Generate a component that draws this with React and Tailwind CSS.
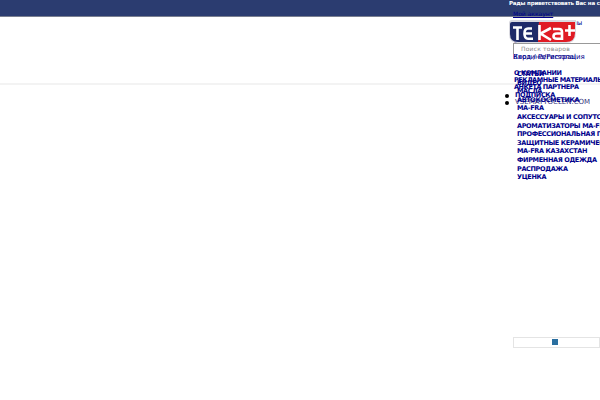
const menu = [
  "СТАТЬИ",
  "ВИДЕО",
  "МАСЛА",
  "АВТОКОСМЕТИКА",
  "MA-FRA",
  "АКСЕССУАРЫ И СОПУТСТВУЮЩИЕ",
  "АРОМАТИЗАТОРЫ MA-FRA",
  "ПРОФЕССИОНАЛЬНАЯ ПОЛИРОВКА",
  "ЗАЩИТНЫЕ КЕРАМИЧЕСКИЕ",
  "MA-FRA КАЗАХСТАН",
  "ФИРМЕННАЯ ОДЕЖДА",
  "РАСПРОДАЖА",
  "УЦЕНКА",
];
const side = ["О КОМПАНИИ", "РЕКЛАМНЫЕ МАТЕРИАЛЫ", "АНКЕТА ПАРТНЕРА"];

const bold = "text-[6.5px] leading-[7px] font-bold text-[#00008b] whitespace-nowrap tracking-[-0.35px]";
const layer = "col-start-1 row-start-1 min-w-0";

function Logo() {
  return (
    <svg width="68" height="24" viewBox="0 0 68 24" className="block">
      <path d="M3 0H67V13Q67 23 57 23H9Q0 23 0 14V3Q0 0 3 0Z" fill="#d9d9e0" />
      <path d="M3 2H30L29 22H9Q1 22 1 14V4Q1 2 3 2Z" fill="#1f2a68" />
      <path d="M30 2H66V13Q66 22 57 22H29Z" fill="#e01b24" />
      <g fill="none" stroke="#fff" strokeWidth="2.6">
        <path d="M4 7.5H13M8.5 7.5V20" />
        <path d="M23 13.5H15.5Q15.5 8.5 19 8.5H23M15.5 13.5Q15.5 18.7 19 18.7H24" />
        <path d="M30.5 5V20M42 8L31.5 13.5L42 20" />
        <path d="M44 9H50Q53 9 53 12V20M53 13.5H48Q44.5 13.5 44.5 16.2Q44.5 18.7 48 18.7H53" />
        <path d="M60.5 5V16M56 10.5H66" />
      </g>
    </svg>
  );
}

export default function App() {
  return (
    <div className="relative w-[600px] h-[400px] overflow-hidden bg-white font-['DejaVu_Sans',sans-serif]">
      <div className="h-[17px] bg-[#2b3c70] border-b border-[#7a7f90]" />
      <div className="h-[68px] border-b-2 border-[#f3f3f3]" />

      <div className="absolute top-0 bottom-0 left-[505px] right-0 flex flex-col overflow-hidden">
        <div className="h-[11px] shrink-0 pl-[4px] text-[5.5px] leading-[7px] font-bold text-white whitespace-nowrap tracking-[-0.2px]">
          Рады приветствовать Вас на сайте
        </div>

        <div className="h-[8px] shrink-0 pl-[8px] text-[6px] leading-[6px] text-[#00008b] underline whitespace-nowrap">
          Мой аккаунт
        </div>

        <div className="grid h-[24px] shrink-0">
          <div className={layer + " pl-[58px] pt-[1px] text-[7px] leading-[7px] text-[#00008b]"}>цены</div>
          <div className={layer + " pl-[9px] pt-[21px] text-[6px] leading-[6px] text-[#00008b]"}>Каталоги</div>
          <div className={layer + " pl-[4px] pt-[1px]"}><Logo /></div>
        </div>

        <div className="ml-[8px] h-[11px] shrink-0 border-t border-l border-[#999] bg-white text-[6px] leading-[9px] text-[#888] pl-[7px] whitespace-nowrap tracking-[0.2px]">
          Поиск товаров
        </div>

        <div className="grid pl-[8px] h-[7px] shrink-0 text-[7px] leading-[7px] text-[#00008b] whitespace-nowrap">
          <div className={layer}>Вход / Регистрация</div>
          <div className={layer}>Корзина/Personal</div>
        </div>

        <div className="grid mt-[8px] shrink-0">
          <div className={layer + " pl-[9px] pt-[1px]"}>
            {side.map((s) => (
              <div key={s} className={bold + " tracking-[-0.45px]"}>{s}</div>
            ))}
            <ul className="mt-[1px]">
              <li className="flex items-center h-[7px] gap-[6px]">
                <span className="w-[4px] h-[4px] rounded-full bg-black ml-[-9px]" />
                <span className={bold}>ПОДПИСКА</span>
              </li>
              <li className="flex items-center h-[7px] gap-[6px]">
                <span className="w-[4px] h-[4px] rounded-full bg-black ml-[-9px]" />
                <span className="text-[7px] leading-[7px] text-[#33337a] whitespace-nowrap">VSEMAYTOCLEN.COM</span>
              </li>
            </ul>
          </div>
          <div className={layer + " pl-[12px] pt-[1px]"}>
            {menu.map((m) => (
              <div key={m} className={bold + " h-[8.6px] leading-[8.6px]"}>{m}</div>
            ))}
          </div>
        </div>

        <div className="ml-[8px] mt-[155px] h-[11px] shrink-0 border border-[#e4e4e4] flex items-center justify-center pr-[3px]">
          <div className="w-[6px] h-[6px] bg-[#2a6fa0]" />
        </div>
      </div>
    </div>
  );
}
